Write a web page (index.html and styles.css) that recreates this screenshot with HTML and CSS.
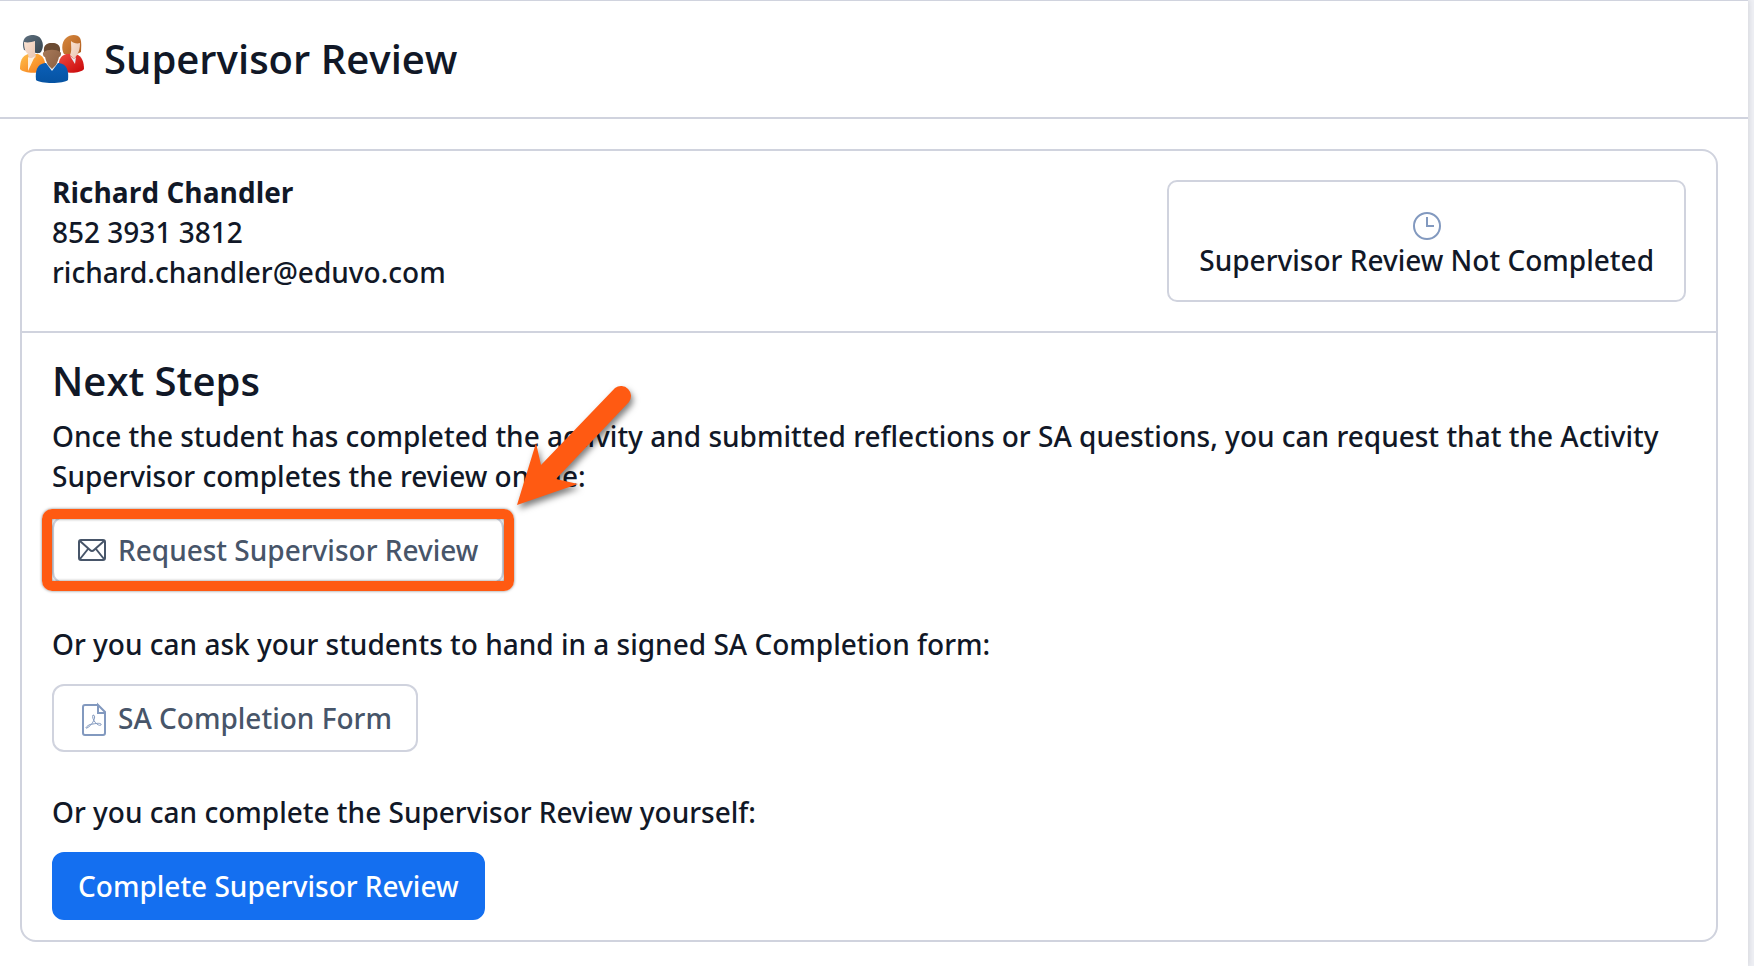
FILE: index.html
```
<!DOCTYPE html>
<html lang="en">
<head>
    <meta charset="UTF-8">
    <meta name="viewport" content="width=device-width, initial-scale=1.0">
    <title>Supervisor Review</title>
    <link rel="stylesheet" href="styles.css">
</head>
<body>
    <div class="panel">
        <header class="panel-header">
            <svg class="people-icon" viewBox="0 0 64 49" aria-hidden="true">
                <defs>
                    <linearGradient id="orange" x1="0" y1="0" x2="1" y2="1"><stop offset="0" stop-color="#ffc04a"/><stop offset="1" stop-color="#f5791a"/></linearGradient>
                    <linearGradient id="red" x1="0" y1="0" x2="1" y2="1"><stop offset="0" stop-color="#ee4b40"/><stop offset="1" stop-color="#c80508"/></linearGradient>
                    <linearGradient id="blue" x1="0" y1="0" x2="0" y2="1"><stop offset="0" stop-color="#0b5fb8"/><stop offset="1" stop-color="#0653a2"/></linearGradient>
                    <linearGradient id="skin" x1="0" y1="0" x2="1" y2="1"><stop offset="0" stop-color="#fbe3d3"/><stop offset="1" stop-color="#e8c4b0"/></linearGradient>
                    <linearGradient id="brown" x1="0" y1="0" x2="1" y2="1"><stop offset="0" stop-color="#ab7d5c"/><stop offset="1" stop-color="#8a5f42"/></linearGradient>
                    <linearGradient id="ginger" x1="0" y1="0" x2="1" y2="1"><stop offset="0" stop-color="#d8893f"/><stop offset="1" stop-color="#b05d1e"/></linearGradient>
                    <linearGradient id="slate" x1="0" y1="0" x2="1" y2="1"><stop offset="0" stop-color="#5f7180"/><stop offset="1" stop-color="#37454f"/></linearGradient>
                </defs>
                <!-- left -->
                <path d="M4 15C2 10 3 4 6 2C10-1 18-1 21 4C24 9 23 14 21 17C19 19 15 18 13 17Z" fill="url(#slate)"/>
                <path d="M0 34C0 26 2 21 8 19H18C24 21 26 27 25 34C22 39 4 39 0 34Z" fill="url(#orange)"/>
                <path d="M4 7C8 8 12 7 15 6V17C15 20 17 20 15 23L9 25L8 19C5 17 4 12 4 7Z" fill="url(#skin)"/>
                <path d="M8 22C10 24 13 23 15 21L8 36Z" fill="#fff1df"/>
                <!-- right -->
                <path d="M44 19C41 14 42 6 46 3C50-1 58-1 60 3C62 7 61 13 61 17L55 20Z" fill="url(#ginger)"/>
                <path d="M39 34C38 26 40 21 46 19H56C62 21 64 27 64 34C60 39 44 39 39 34Z" fill="url(#red)"/>
                <path d="M51 6C53 8 57 9 60 8C60 13 59 17 57 20L54 24L50 20C52 16 51 12 51 6Z" fill="url(#skin)"/>
                <path d="M50 21L54 24L56 22L55 29Z" fill="#e6ecf3"/>
                <!-- front -->
                <path d="M16 45C15 36 17 29 25 28H39C47 29 49 36 48 45C44 49 20 49 16 45Z" fill="url(#blue)"/>
                <path d="M26 28L32 36L38 28Z" fill="#eef3f8"/>
                <path d="M24 17C24 10 27 8 32 8S40 10 40 17C42 17 41 22 39 22C38 26 37 28 36 30L32 34L28 30C27 28 26 26 25 22C23 22 22 17 24 17Z" fill="url(#brown)"/>
                <path d="M24 17C23 10 27 8 32 8S41 10 40 17C37 14 27 14 24 17Z" fill="#6b4b33"/>
            </svg>
            <h1>Supervisor Review</h1>
        </header>

        <main class="card">
            <section class="card-header">
                <address class="contact">
                    <strong>Richard Chandler</strong>
                    <span>852 3931 3812</span>
                    <span>richard.chandler@eduvo.com</span>
                </address>
                <div class="status">
                    <svg class="clock-icon" viewBox="0 0 28 28" aria-hidden="true">
                        <circle cx="14" cy="14" r="13"/>
                        <path d="M14 5V14H21"/>
                    </svg>
                    <span>Supervisor Review Not Completed</span>
                </div>
            </section>

            <section class="card-body">
                <h2>Next Steps</h2>
                <p>Once the student has completed the activity and submitted reflections or SA questions, you can request that the Activity Supervisor completes the review online:</p>
                <div class="highlight">
                    <button type="button" class="btn">
                        <svg class="mail-icon" viewBox="0 0 28 22" aria-hidden="true">
                            <rect x="1" y="1" width="26" height="20" rx="2"/>
                            <path d="M2 2L12 11Q14 13 16 11L26 2M2 20L10 10M26 20L18 10"/>
                        </svg>
                        Request Supervisor Review
                    </button>
                    <svg class="arrow" viewBox="0 0 130 130" aria-hidden="true">
                        <path d="M7 124L26 62L31 84L105 7A10 10 0 0 1 119 21L46 98L68 103Z"/>
                    </svg>
                </div>
                <p>Or you can ask your students to hand in a signed SA Completion form:</p>
                <button type="button" class="btn">
                    <svg class="pdf-icon" viewBox="0 -4 28 36" aria-hidden="true">
                        <path d="M19 1H7Q5 1 5 3V29Q5 31 7 31H25Q27 31 27 29V8L20 1V9H27"/>
                        <path d="M15 11C19 11 15 21 9 24C6 25 10 20 15 20C20 19 24 19 23 21C20 23 13 15 15 11Z" stroke-width="1"/>
                    </svg>
                    SA Completion Form
                </button>
                <p>Or you can complete the Supervisor Review yourself:</p>
                <button type="button" class="btn btn-primary">Complete Supervisor Review</button>
            </section>
        </main>
    </div>
</body>
</html>
```
FILE: styles.css
```
* { box-sizing: border-box; }
body {
    margin: 0;
    padding-right: 6px;
    background: #eeeff4;
    color: #111827;
    font: 500 28px/40px "Noto Sans", "Open Sans", sans-serif;
}
h1, h2, p { margin: 0; }
.panel {
    min-height: 100vh;
    padding-bottom: 24px;
    background: #fff;
    border-top: 1px solid #d0d3de;
    box-shadow: 0 0 6px rgba(17, 24, 39, 0.15);
}
.panel-header {
    display: flex;
    align-items: center;
    gap: 20px;
    padding: 30px 20px;
    border-bottom: 2px solid #d0d3de;
}
h1, h2, strong { font-family: "Open Sans", "Noto Sans", sans-serif; }
h1, h2 { font-size: 40px; font-weight: 600; line-height: 56px; }
.people-icon { width: 64px; height: 49px; }

.card {
    margin: 30px 30px 0 20px;
    border: 2px solid #d0d3de;
    border-radius: 16px;
}
.card-header {
    display: flex;
    justify-content: space-between;
    align-items: flex-start;
    padding: 21px 30px 29px;
    border-bottom: 2px solid #d0d3de;
}
.contact { display: flex; flex-direction: column; font-style: normal; }
.contact strong { font-weight: 700; }
.status {
    display: flex;
    flex-direction: column;
    align-items: center;
    margin-top: 8px;
    padding: 30px 30px 20px;
    border: 2px solid #d0d3de;
    border-radius: 10px;
}
svg { flex: none; }
.clock-icon { width: 28px; height: 28px; }
.clock-icon, .pdf-icon { fill: none; stroke: #8299bf; stroke-width: 2; }

.card-body { padding: 20px 30px 20px; }
h2 { margin-bottom: 7px; }
.card-body p { margin-bottom: 20px; }
.btn {
    display: flex;
    align-items: center;
    gap: 12px;
    padding: 12px 24px;
    border: 2px solid #d0d3de;
    border-radius: 12px;
    background: #fff;
    color: #475569;
    font: inherit;
    cursor: pointer;
}
.card-body > .btn + p, .highlight + p { margin-top: 40px; }
.btn:hover { border-color: #8299bf; }
.btn-primary { border-color: #146ff0; background: #146ff0; color: #fff; }
.mail-icon { width: 28px; height: 22px; fill: none; stroke: #475569; stroke-width: 2; }
.pdf-icon { width: 28px; height: 36px; }

/* callout round the request button */
.highlight { position: relative; width: fit-content; }
.highlight::after {
    content: "";
    position: absolute;
    inset: -7px -10px;
    border: 10px solid #ff5a12;
    border-radius: 10px;
    box-shadow: 0 0 3px rgba(0, 0, 0, 0.5), inset 0 0 3px rgba(0, 0, 0, 0.5);
    pointer-events: none;
}
.arrow {
    position: absolute;
    left: calc(100% + 6px);
    bottom: 73px;
    width: 130px;
    height: 130px;
    overflow: visible;
    fill: #ff5a12;
    filter: drop-shadow(2px 4px 3px rgba(0, 0, 0, 0.5));
    pointer-events: none;
}
```
